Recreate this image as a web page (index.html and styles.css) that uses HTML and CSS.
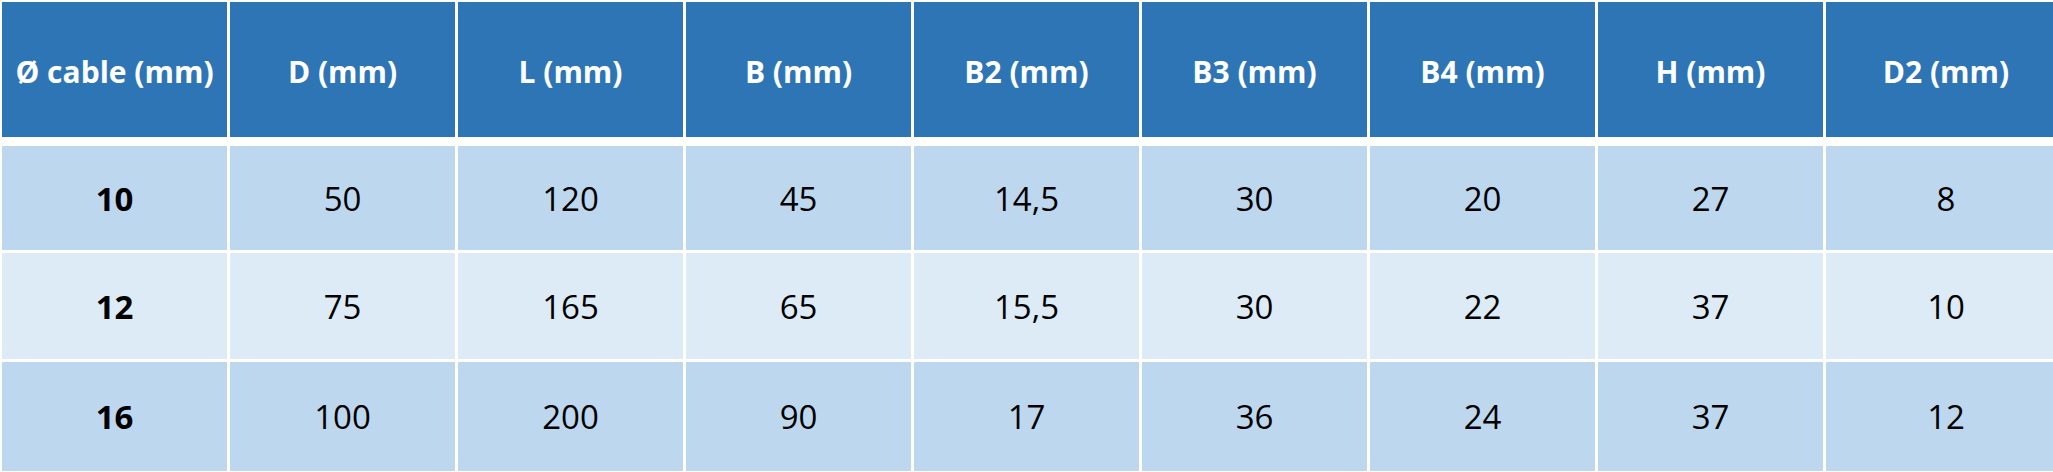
FILE: index.html
```html
<!DOCTYPE html>
<html>
<head>
    <link rel="stylesheet" href="styles.css">
</head>
<body>
    <div class="sheet">
        <div class="row head">
            <div class="cell">Ø cable (mm)</div>
            <div class="cell">D (mm)</div>
            <div class="cell">L (mm)</div>
            <div class="cell">B (mm)</div>
            <div class="cell">B2 (mm)</div>
            <div class="cell">B3 (mm)</div>
            <div class="cell">B4 (mm)</div>
            <div class="cell">H (mm)</div>
            <div class="cell">D2 (mm)</div>
        </div>
        <div class="row dark r1">
            <div class="cell key">10</div>
            <div class="cell">50</div>
            <div class="cell">120</div>
            <div class="cell">45</div>
            <div class="cell">14,5</div>
            <div class="cell">30</div>
            <div class="cell">20</div>
            <div class="cell">27</div>
            <div class="cell">8</div>
        </div>
        <div class="row light r2">
            <div class="cell key">12</div>
            <div class="cell">75</div>
            <div class="cell">165</div>
            <div class="cell">65</div>
            <div class="cell">15,5</div>
            <div class="cell">30</div>
            <div class="cell">22</div>
            <div class="cell">37</div>
            <div class="cell">10</div>
        </div>
        <div class="row dark r3">
            <div class="cell key">16</div>
            <div class="cell">100</div>
            <div class="cell">200</div>
            <div class="cell">90</div>
            <div class="cell">17</div>
            <div class="cell">36</div>
            <div class="cell">24</div>
            <div class="cell">37</div>
            <div class="cell">12</div>
        </div>
    </div>
</body>
</html>
```

FILE: styles.css
```css
body {
    margin: 0;
    background: #fff;
    overflow: hidden;
}
.sheet {
    padding: 2px 0 0 2px;
    display: flex;
    flex-direction: column;
    gap: 3px;
    font-family: "Open Sans", Arial, sans-serif;
}
.row {
    display: grid;
    grid-template-columns: repeat(8, 225px) 240px;
    gap: 3px;
}
.cell {
    display: flex;
    align-items: center;
    justify-content: center;
    color: #000;
    font-size: 33px;
}
.head {
    height: 135px;
    margin-bottom: 6px;
}
.head .cell {
    background: #2e75b6;
    color: #fff;
    font-weight: bold;
    font-size: 30px;
    padding-top: 4px;
}
.r1 { height: 104px; }
.r2 { height: 106px; }
.r3 { height: 109px; }
.dark .cell {
    background: #bdd7ee;
}
.light .cell {
    background: #ddebf7;
}
.key {
    font-weight: bold;
}
```
